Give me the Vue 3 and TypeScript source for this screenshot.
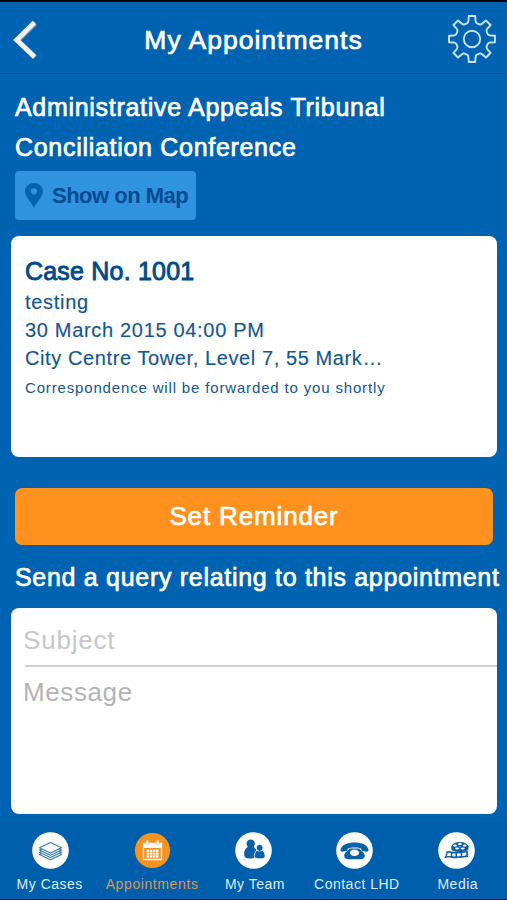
<script setup lang="ts">
import { ref } from 'vue'

type TabId = 'cases' | 'appointments' | 'team' | 'contact' | 'media'

interface Tab {
  id: TabId
  label: string
}

const tabs: Tab[] = [
  { id: 'cases', label: 'My Cases' },
  { id: 'appointments', label: 'Appointments' },
  { id: 'team', label: 'My Team' },
  { id: 'contact', label: 'Contact LHD' },
  { id: 'media', label: 'Media' },
]

const activeTab = ref<TabId>('appointments')
const subject = ref('')
const message = ref('')

// Outline of an eight-toothed gear centred on the origin, with rounded valleys.
function gearPath(): string {
  const at = (degrees: number, radius: number): string => {
    const angle = (degrees * Math.PI) / 180
    return `${(radius * Math.sin(angle)).toFixed(2)} ${(-radius * Math.cos(angle)).toFixed(2)}`
  }
  let path = `M${at(-8, 23.2)}`
  for (let tooth = 0; tooth < 8; tooth++) {
    const a = tooth * 45
    path += `L${at(a + 8, 23.2)}L${at(a + 11, 18.6)}Q${at(a + 13, 16.6)} ${at(a + 18, 16.4)}`
    path += `L${at(a + 27, 16.4)}Q${at(a + 32, 16.6)} ${at(a + 34, 18.6)}L${at(a + 37, 23.2)}`
  }
  return `${path}Z`
}

const gear = gearPath()
</script>

<template>
  <div class="screen">
    <header class="navbar">
      <button class="back" aria-label="Back">
        <svg width="28" height="44" viewBox="0 0 28 44">
          <path d="M24.200 5.200 6.600 22.400 24.200 39.400" fill="none" stroke="#8b9aa4" stroke-width="5" />
          <path d="M23.400 4.400 5.600 22 23.400 38.800" fill="none" stroke="#f3f4f4" stroke-width="4.800" />
        </svg>
      </button>
      <h1 class="title">My Appointments</h1>
      <button class="settings" aria-label="Settings">
        <svg width="50" height="50" viewBox="-25 -25 50 50" fill="none" stroke="#c9e1f6" stroke-linejoin="round">
          <path :d="gear" stroke-width="1.900" />
          <circle r="8.200" stroke-width="1.900" />
        </svg>
      </button>
    </header>

    <main class="content">
      <h2 class="heading">Administrative Appeals Tribunal<br />Conciliation Conference</h2>
      <button class="map-button">
        <svg width="20" height="27" viewBox="0 0 20 27">
          <path
            fill="#0063b0"
            fill-rule="evenodd"
            d="M10 1C4.800 1 1 4.800 1 9.600c0 5 5.400 8.700 9 16.400 3.600-7.700 9-11.400 9-16.400C19 4.800 15.200 1 10 1Zm0 5.200a3.100 3.100 0 1 1 0 6.200 3.100 3.100 0 0 1 0-6.200Z"
          />
        </svg>
        <span>Show on Map</span>
      </button>

      <section class="card case">
        <h3 class="case-number">Case No. 1001</h3>
        <p class="line">testing</p>
        <p class="line date">30 March 2015 04:00 PM</p>
        <p class="line address">City Centre Tower, Level 7, 55 Mark…</p>
        <p class="note">Correspondence will be forwarded to you shortly</p>
      </section>

      <button class="reminder">Set Reminder</button>

      <h2 class="query-title">Send a query relating to this appointment</h2>

      <form class="card query" @submit.prevent>
        <input v-model="subject" class="subject" type="text" placeholder="Subject" />
        <textarea v-model="message" class="message" placeholder="Message"></textarea>
      </form>
    </main>

    <nav class="tabbar">
      <button
        v-for="tab in tabs"
        :key="tab.id"
        class="tab"
        :class="[tab.id, { active: tab.id === activeTab }]"
        @click="activeTab = tab.id"
      >
        <svg class="tab-icon" width="37" height="37" viewBox="0 0 37 37">
          <circle class="disc" cx="18.500" cy="18.500" :r="tab.id === activeTab ? 17.6 : 18.3" />
          <g v-if="tab.id === 'cases'" fill="#fff" stroke="#3a79b4" stroke-width="1.100" stroke-linejoin="round">
            <path d="M7.500 22.500 18.500 27.800 29.500 22.500 18.500 17Z" />
            <path d="M7.500 20.200 18.500 25.500 29.500 20.200 18.500 14.700Z" />
            <path d="M7.500 17.900 18.500 23.200 29.500 17.900 18.500 12.400Z" />
            <path d="M7.500 15.800 18.500 21 29.500 15.800 18.500 10.600Z" />
          </g>
          <g v-else-if="tab.id === 'appointments'">
            <path d="M9.500 11.500h18v16h-18Z" fill="none" stroke="#fff" stroke-width="1.300" />
            <path d="M9 11h19v5H9ZM12 8.500h2.500v4H12ZM22.500 8.500H25v4h-2.500Z" fill="#fff" />
            <path d="M11.700 8.500v3.500h3.300v-3.500M22 8.500v3.500h3.300v-3.500" fill="none" stroke="#f79321" stroke-width=".5" />
            <g fill="#fff">
              <template v-for="row in 3" :key="row">
                <rect v-for="col in 4" :key="col" :x="9.5 + col * 3.15" :y="14.8 + row * 2.85" width="2.500" height="2.200" />
              </template>
            </g>
          </g>
          <g v-else-if="tab.id === 'team'" fill="#0c5fa9">
            <circle cx="15.700" cy="11.800" r="4.200" />
            <path d="M13.500 14.500h4.500c2.800 1.500 3.800 4 3.300 7-1 1-1.300 2.500-1.200 4.300-3.600 1.200-7.600 1-10.400-.8-1.400-4.300-.4-8.500 3.800-10.500Z" />
            <path d="M23 17.500h3.300c3.300 1.600 4.300 4.900 3.400 8.400-2.900 1.200-7.100 1.200-10 0-.9-3.600.3-6.800 3.300-8.400Z" stroke="#fff" stroke-width=".8" />
            <circle cx="24.700" cy="15.800" r="3.400" stroke="#fff" stroke-width=".8" />
            <path d="m23.600 18 1.100 1.400 1.100-1.400Z" />
          </g>
          <g v-else-if="tab.id === 'contact'" fill="#0c5fa9">
            <path d="M4.500 17.600C5.500 13 11.500 10.500 18.500 10.500S31.500 13 32.500 17.600c.2 1.500-.7 2.400-2 2.100l-3.700-.8c-1-.3-1.500-1-1.500-2.200-2.200-1.700-11.400-1.700-13.600 0 0 1.200-.5 1.900-1.500 2.200l-3.700.8c-1.300.3-2.200-.6-2-2.100Z" />
            <path fill-rule="evenodd" d="M13.800 16.600h9.400c1.400 2.300 5.600 3.600 5.600 7.200 0 2.300-1.600 3.400-4 3.400H12.200c-2.400 0-4-1.100-4-3.400 0-3.600 4.200-4.900 5.600-7.200Zm4.700.9c-2.700 0-4.600 1.300-4.600 3.200s1.900 3.200 4.600 3.200 4.600-1.300 4.600-3.200-1.900-3.200-4.600-3.200Z" />
          </g>
          <g v-else>
            <path d="M13.400 14.600v2.400c0 4 17 4 17 0v-2.400Z" fill="#0c5fa9" />
            <ellipse cx="21.900" cy="14.500" rx="8.600" ry="4.400" fill="#0c5fa9" />
            <g fill="#fff">
              <ellipse cx="21.900" cy="11.900" rx="2.100" ry="1" />
              <ellipse cx="17.100" cy="13.600" rx="1.900" ry="1.100" />
              <ellipse cx="26.700" cy="13.600" rx="1.900" ry="1.100" />
              <ellipse cx="19.100" cy="16.500" rx="2" ry="1.100" />
              <ellipse cx="24.700" cy="16.500" rx="2" ry="1.100" />
              <circle cx="21.900" cy="14.300" r=".6" />
            </g>
            <path d="M8.300 19.700c2.900-1.600 5.700.3 9.200.2 4.200-.1 8.300-.7 12.400-1v6.200c-4.100.3-8.200 1-12.400 1.100-4 0-7-1.900-11.400.3 1.200-2 2.200-3.800 2.200-6.800Z" fill="#0c5fa9" />
            <path d="M9.600 21c1.200-.4 2.200-.1 3.200.1v3c-1.200-.3-2.500-.3-3.900.1ZM14.300 21.400l3.200.2v2.900l-3.200-.3ZM19 21.600l3.700-.4v2.900l-3.700.4ZM24.200 21l4-.4v2.900l-4 .4Z" fill="#fff" />
          </g>
        </svg>
        <span class="tab-label">{{ tab.label }}</span>
      </button>
    </nav>
  </div>
</template>

<style>
body {
  background: #0063b1;
}
</style>

<style scoped>
* {
  box-sizing: border-box;
}

.screen {
  display: flex;
  flex-direction: column;
  width: 507px;
  height: 900px;
  overflow: hidden;
  border-top: 2px solid #000;
  border-bottom: 1px solid #001c45;
  background: #0063b1;
  color: #fff;
  font-family: 'Liberation Sans', Arial, sans-serif;
}

button {
  margin: 0;
  padding: 0;
  border: 0;
  background: none;
  color: inherit;
  font: inherit;
}

h1,
h2,
h3,
p {
  margin: 0;
  font-weight: 400;
  white-space: nowrap;
}

svg {
  display: block;
  flex: none;
}

.navbar {
  display: grid;
  grid-template-columns: 60px 1fr 60px;
  align-items: center;
  height: 72px;
  flex: none;
  border-bottom: 1px solid #00529b;
}

.back {
  padding: 0 0 0 11px;
  margin-top: 4px;
}

.settings {
  margin-top: 3px;
}

.title {
  padding-top: 6px;
  text-align: center;
  font-size: 26.500px;
  letter-spacing: 1px;
  -webkit-text-stroke: 0.700px;
}

.content {
  display: flex;
  flex-direction: column;
  align-items: flex-start;
  flex: 1;
  padding: 14px 11px 0;
}

.heading {
  padding-left: 4px;
  font-size: 25px;
  line-height: 39.500px;
  letter-spacing: 0.700px;
  -webkit-text-stroke: 0.700px;
}

.map-button {
  display: flex;
  align-items: center;
  gap: 8px;
  width: 181px;
  height: 49px;
  margin: 4px 0 0 4px;
  padding-left: 9px;
  border-radius: 4px;
  background: #2f93df;
  color: #004b91;
  font-size: 22px;
  font-weight: 700;
  letter-spacing: -0.500px;
}

.card {
  width: 486px;
  border-radius: 8px;
  background: #fff;
}

.case {
  height: 221px;
  margin-top: 16px;
  padding: 19px 14px 0;
  color: #135692;
}

.case-number {
  color: #004b88;
  font-size: 25px;
  line-height: 32px;
  letter-spacing: 0.200px;
  -webkit-text-stroke: 0.900px;
}

.line {
  font-size: 20px;
  line-height: 28px;
  letter-spacing: 0.700px;
  -webkit-text-stroke: 0.150px;
}

.case-number + .line {
  margin-top: 1px;
}

.date {
  letter-spacing: 0.680px;
}

.address {
  letter-spacing: 0.600px;
}

.note {
  margin-top: 3px;
  font-size: 15px;
  line-height: 26px;
  letter-spacing: 0.840px;
}

.reminder {
  width: 478px;
  height: 57px;
  margin: 31px 0 0 4px;
  border-radius: 7px;
  background: #ff921e;
  text-align: center;
  font-size: 26px;
  letter-spacing: 0.850px;
  -webkit-text-stroke: 0.700px;
}

.query-title {
  margin: 12px 0 0 4px;
  font-size: 25px;
  line-height: 40px;
  letter-spacing: 0.700px;
  -webkit-text-stroke: 0.700px;
}

.query {
  display: flex;
  flex-direction: column;
  height: 206px;
  margin-top: 11px;
  overflow: hidden;
}

.subject,
.message {
  display: block;
  border: 0;
  outline: 0;
  background: transparent;
  color: #135692;
  font-family: inherit;
  font-size: 26px;
}

.subject {
  height: 59px;
  margin-left: 14px;
  padding: 7px 0 0;
  border-bottom: 2px solid #d2d2d3;
  letter-spacing: 0.800px;
  text-indent: -2px;
}

.message {
  flex: 1;
  padding: 10px 12px;
  line-height: 30px;
  letter-spacing: 0.600px;
  resize: none;
}

.subject::placeholder {
  color: #c7c7cb;
}

.message::placeholder {
  color: #b3b3b5;
}

.tabbar {
  display: grid;
  grid-template-columns: repeat(5, 101.400px);
  flex: none;
  height: 77px;
  background: #005fac;
}

.tab {
  display: flex;
  flex-direction: column;
  align-items: center;
  padding-top: 10px;
  color: #dcecfa;
}

.tab-label {
  margin-top: 7px;
  font-size: 14px;
  line-height: 16px;
  letter-spacing: 0.500px;
  white-space: nowrap;
}

.appointments .tab-label {
  letter-spacing: 0.600px;
}

.cases .tab-label {
  padding-right: 2px;
}

.team .tab-label,
.media .tab-label {
  padding-left: 3px;
}

.contact .tab-label {
  padding-left: 4px;
}

.disc {
  fill: #fff;
}

.active {
  color: #d39a55;
}

.active .disc {
  fill: #f79321;
}
</style>
